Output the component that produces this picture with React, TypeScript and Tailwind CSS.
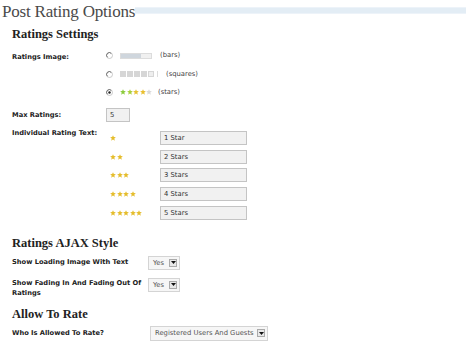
import React from "react";

const Star = ({ color, size = 6 }: { color: string; size?: number }) => (
  <svg width={size} height={size} viewBox="0 0 10 10" className="shrink-0">
    <polygon
      points="5,0.3 6.4,3.5 9.8,3.7 7.2,6 8,9.6 5,7.7 2,9.6 2.8,6 0.2,3.7 3.6,3.5"
      fill={color}
    />
  </svg>
);

const Radio = ({ checked = false }: { checked?: boolean }) => (
  <svg width="7" height="7" viewBox="0 0 14 14" className="shrink-0">
    <circle cx="7" cy="7" r="6" fill="#fff" stroke="#b8b8b8" strokeWidth="1.5" />
    <path d="M2.8 10.5 A5.2 5.2 0 0 1 10.5 2.8" fill="none" stroke="#555" strokeWidth="1.6" />
    {checked && <circle cx="7" cy="7" r="2.4" fill="#222" />}
  </svg>
);

const SelectBox = ({ value, width, height = "h-[14px]" }: { value: string; width: string; height?: string }) => (
  <div
    className={`${width} ${height} shrink-0 flex items-center justify-between bg-[#f6f6f6] border border-[#d4d4d4] pl-[4px] pr-[2px]`}
  >
    <span className="text-[6.8px] text-[#555] whitespace-nowrap">{value}</span>
    <span className="w-[8px] h-[8px] bg-[#e8e8e8] border border-[#aaa] flex items-center justify-center">
      <svg width="5" height="3" viewBox="0 0 5 3">
        <polygon points="0,0 5,0 2.5,3" fill="#111" />
      </svg>
    </span>
  </div>
);

const TextBox = ({ value, width }: { value: string; width: string }) => (
  <div
    className={`${width} h-[14px] shrink-0 flex items-center bg-[#f1f1f1] border border-[#c4c4c4] pl-[3px] text-[6.8px] text-[#333] whitespace-nowrap`}
  >
    {value}
  </div>
);

const Heading = ({ children, className = "" }: { children: React.ReactNode; className?: string }) => (
  <h2 className={`font-['Liberation_Serif',serif] font-bold text-[12.5px] leading-[14px] text-[#222] ${className}`}>
    {children}
  </h2>
);

const Label = ({ children, className = "" }: { children: React.ReactNode; className?: string }) => (
  <div className={`shrink-0 font-bold text-[6.7px] leading-[10px] text-[#222] ${className}`}>{children}</div>
);

const App = () => {
  const ratingTexts = ["1 Star", "2 Stars", "3 Stars", "4 Stars", "5 Stars"];

  return (
    <div className="w-[468px] h-[347px] overflow-hidden bg-white font-['DejaVu_Sans',sans-serif]">
      {/* Page title */}
      <div className="flex items-center h-[24px] pl-[2px]">
        <h1 className="font-['Liberation_Serif',serif] text-[17px] leading-[24px] text-[#4a4a4a] tracking-[-0.2px] whitespace-nowrap">
          Post Rating Options
        </h1>
        <div className="flex-1 h-[7px] mr-[2px] -mt-[4px] bg-[#e3edf5] border-y border-[#edf3f9]" />
      </div>

      <div className="pl-[12px]">
        <Heading className="mt-[3px]">Ratings Settings</Heading>

        {/* Ratings image */}
        <div className="flex mt-[5px]">
          <Label className="w-[94px] pt-[6px] whitespace-nowrap">Ratings Image:</Label>
          <div className="flex flex-col">
            <div className="flex items-center h-[19px] gap-[7px]">
              <Radio />
              <div className="flex w-[32px] h-[6px] border border-[#dcdcdc] bg-[#f0f0f0]">
                <div className="w-[20px] bg-[#cfd6dd]" />
              </div>
              <span className="text-[6.8px] text-[#444] ml-[1px]">(bars)</span>
            </div>
            <div className="flex items-center h-[18px] gap-[7px]">
              <Radio />
              <div className="flex gap-[1px]">
                {[0, 1, 2, 3].map((i) => (
                  <div key={i} className="w-[6px] h-[6px] bg-[#d6d6d6]" />
                ))}
                <div className="w-[6px] h-[6px] bg-[#eee] border border-[#d6d6d6]" />
                <div className="w-[3px] h-[6px] border-r border-[#ddd]" />
              </div>
              <span className="text-[6.8px] text-[#444] ml-[1px]">(squares)</span>
            </div>
            <div className="flex items-center h-[18px] gap-[7px]">
              <Radio checked />
              <div className="flex gap-[0.5px] w-[32px]">
                <Star color="#8ccb3c" />
                <Star color="#a8cf3a" />
                <Star color="#e6c232" />
                <Star color="#e9bf2f" />
                <Star color="#d8d8d8" />
              </div>
              <span className="text-[6.8px] text-[#444] -ml-[1px]">(stars)</span>
            </div>
          </div>
        </div>

        {/* Max ratings */}
        <div className="flex items-center mt-[6px] h-[16px]">
          <Label className="w-[94px] whitespace-nowrap">Max Ratings:</Label>
          <TextBox value="5" width="w-[24px]" />
        </div>

        {/* Individual rating text */}
        <div className="flex mt-[5px]">
          <Label className="w-[94px] whitespace-nowrap">Individual Rating Text:</Label>
          <div className="flex flex-col pt-[1px]">
            {ratingTexts.map((t, i) => (
              <div key={t} className="flex items-center h-[18.6px]">
                <div className="w-[54px] pl-[4px] flex gap-[0.5px]">
                  {Array.from({ length: i + 1 }).map((_, j) => (
                    <Star key={j} color="#e5bd2c" />
                  ))}
                </div>
                <TextBox value={t} width="w-[87px]" />
              </div>
            ))}
          </div>
        </div>

        <Heading className="mt-[14px]">Ratings AJAX Style</Heading>

        <div className="flex items-start mt-[6px]">
          <Label className="w-[136px] pt-[1px]">Show Loading Image With Text</Label>
          <SelectBox value="Yes" width="w-[32px]" />
        </div>
        <div className="flex items-start mt-[8px]">
          <Label className="w-[136px]">Show Fading In And Fading Out Of Ratings</Label>
          <SelectBox value="Yes" width="w-[32px]" />
        </div>

        <Heading className="mt-[9px]">Allow To Rate</Heading>

        <div className="flex items-start mt-[5px]">
          <Label className="w-[138px] pt-[2px]">Who Is Allowed To Rate?</Label>
          <SelectBox value="Registered Users And Guests" width="w-[118px]" height="h-[15px]" />
        </div>
      </div>
    </div>
  );
};

export default App;
